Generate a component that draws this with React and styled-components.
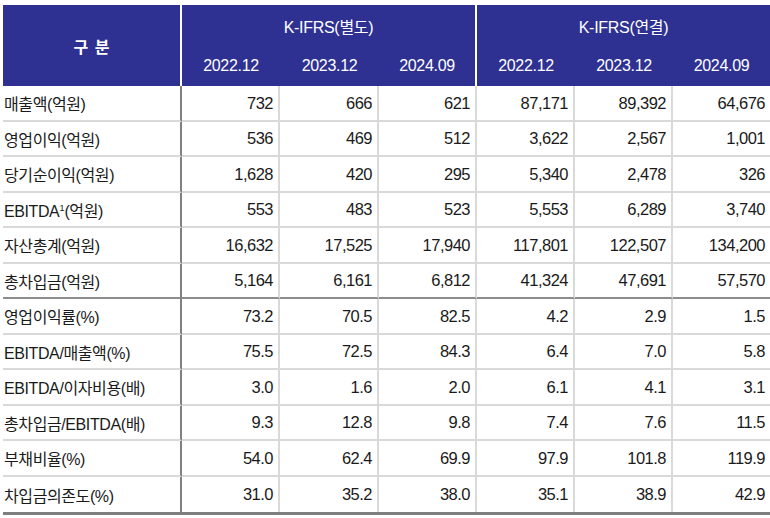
import React from 'react';
import styled, { createGlobalStyle } from 'styled-components';

// === STYLES ===

const GlobalStyle = createGlobalStyle`
  html, body {
    margin: 0;
    padding: 0;
    background: #ffffff;
  }
  body {
    font-family: "Liberation Sans", "Noto Sans CJK KR", sans-serif;
    color: #1a1a1a;
  }
`;

const Page = styled.div`
  padding: 5px 0 0 3px;
  width: 770px;
  box-sizing: border-box;
  overflow: hidden;
`;

const Table = styled.table`
  width: 767px;
  table-layout: fixed;
  border-collapse: separate;
  border-spacing: 0;
  border-bottom: 3px solid #7f7f7f;
`;

const HeadCell = styled.th`
  background-color: #2e3192;
  color: #ffffff;
  height: 40.5px;
  padding: 0;
  font-weight: normal;
  font-size: 16px;
  letter-spacing: -0.3px;
  text-align: center;
  vertical-align: middle;
  border-right: ${(p) => (p.$divider ? '2px solid #ffffff' : 'none')};
  box-sizing: border-box;
`;

const CornerCell = styled(HeadCell)`
  font-family: "Noto Sans CJK KR", sans-serif;
  font-weight: 700;
  font-size: 16px;
  letter-spacing: 0;
  word-spacing: 3px;
`;

const GroupCell = styled(HeadCell)`
  padding-top: 2px;
`;

const Row = styled.tr``;

const LabelCell = styled.td`
  height: 35.5px;
  padding: 1px 0 0 1px;
  font-size: 16px;
  letter-spacing: -0.4px;
  white-space: nowrap;
  text-align: left;
  vertical-align: middle;
  border-right: 2px solid #808080;
  border-bottom: ${(p) => (p.$section ? '2px solid #8c8c8c' : '2px solid #d9d9d9')};
  box-sizing: border-box;
`;

const NumCell = styled.td`
  height: 35.5px;
  padding: 1px 5px 0 0;
  font-size: 16.5px;
  letter-spacing: -0.5px;
  text-align: right;
  vertical-align: middle;
  border-right: ${(p) => (p.$last ? 'none' : '2px solid #d9d9d9')};
  border-bottom: ${(p) => (p.$section ? '2px solid #8c8c8c' : '2px solid #d9d9d9')};
  box-sizing: border-box;
`;

const Sup = styled.sup`
  font-size: 9px;
  vertical-align: 6px;
  line-height: 0;
  letter-spacing: 0;
`;

// === DATA ===

const dates = ['2022.12', '2023.12', '2024.09'];

const rows = [
  { label: '매출액(억원)', values: ['732', '666', '621', '87,171', '89,392', '64,676'] },
  { label: '영업이익(억원)', values: ['536', '469', '512', '3,622', '2,567', '1,001'] },
  { label: '당기순이익(억원)', values: ['1,628', '420', '295', '5,340', '2,478', '326'] },
  { label: 'EBITDA', sup: '1', rest: '(억원)', values: ['553', '483', '523', '5,553', '6,289', '3,740'] },
  { label: '자산총계(억원)', values: ['16,632', '17,525', '17,940', '117,801', '122,507', '134,200'] },
  { label: '총차입금(억원)', values: ['5,164', '6,161', '6,812', '41,324', '47,691', '57,570'], section: true },
  { label: '영업이익률(%)', values: ['73.2', '70.5', '82.5', '4.2', '2.9', '1.5'] },
  { label: 'EBITDA/매출액(%)', values: ['75.5', '72.5', '84.3', '6.4', '7.0', '5.8'] },
  { label: 'EBITDA/이자비용(배)', values: ['3.0', '1.6', '2.0', '6.1', '4.1', '3.1'] },
  { label: '총차입금/EBITDA(배)', values: ['9.3', '12.8', '9.8', '7.4', '7.6', '11.5'] },
  { label: '부채비율(%)', values: ['54.0', '62.4', '69.9', '97.9', '101.8', '119.9'] },
  { label: '차입금의존도(%)', values: ['31.0', '35.2', '38.0', '35.1', '38.9', '42.9'] },
];

const colWidths = [179, 98, 99, 98, 98, 98, 97];

// === COMPONENT ===

export default function App() {
  return (
    <>
      <GlobalStyle />
      <Page>
        <Table>
          <colgroup>
            {colWidths.map((w, i) => (
              <col key={i} style={{ width: w }} />
            ))}
          </colgroup>
          <thead>
            <tr>
              <CornerCell rowSpan={2} $divider>
                구 분
              </CornerCell>
              <GroupCell colSpan={3} $divider>
                K-IFRS(별도)
              </GroupCell>
              <GroupCell colSpan={3}>K-IFRS(연결)</GroupCell>
            </tr>
            <tr>
              {dates.map((d, i) => (
                <HeadCell key={'a' + d} $divider={i === 2}>
                  {d}
                </HeadCell>
              ))}
              {dates.map((d) => (
                <HeadCell key={'b' + d}>{d}</HeadCell>
              ))}
            </tr>
          </thead>
          <tbody>
            {rows.map((r, idx) => {
              const lastRow = idx === rows.length - 1;
              return (
                <Row key={r.label}>
                  <LabelCell $section={r.section} style={lastRow ? { borderBottom: 'none' } : undefined}>
                    {r.label}
                    {r.sup && <Sup>{r.sup}</Sup>}
                    {r.rest}
                  </LabelCell>
                  {r.values.map((v, i) => (
                    <NumCell
                      key={i}
                      $last={i === r.values.length - 1}
                      $section={r.section}
                      style={lastRow ? { borderBottom: 'none' } : undefined}
                    >
                      {v}
                    </NumCell>
                  ))}
                </Row>
              );
            })}
          </tbody>
        </Table>
      </Page>
    </>
  );
}
